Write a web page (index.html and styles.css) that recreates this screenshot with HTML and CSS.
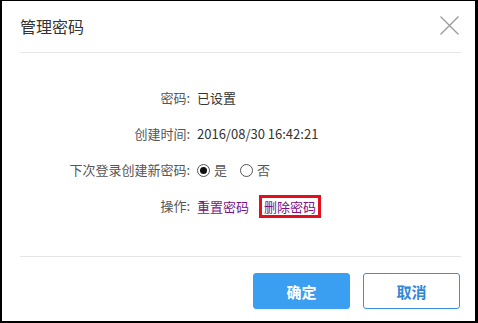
FILE: index.html
```html
<!DOCTYPE html>
<html lang="zh-CN">
<head>
<meta charset="utf-8">
<title>管理密码</title>
<link rel="stylesheet" href="styles.css">
</head>
<body>
<div class="dialog">
  <div class="header">
    <div class="title">管理密码</div>
    <svg class="close" width="19" height="19" viewBox="0 0 19 19"><path d="M0.5 0.5L18.5 18.5M18.5 0.5L0.5 18.5" stroke="#9a9a9a" stroke-width="1.3" fill="none"/></svg>
  </div>
  <div class="body">
    <div class="label">密码:</div>
    <div class="value">已设置</div>
    <div class="label">创建时间:</div>
    <div class="value">2016/08/30 16:42:21</div>
    <div class="label">下次登录创建新密码:</div>
    <div class="value radios">
      <span class="radio checked"></span><span class="opt">是</span>
      <span class="radio"></span><span class="opt">否</span>
    </div>
    <div class="label">操作:</div>
    <div class="value links">
      <a class="link">重置密码</a>
      <a class="link marked">删除密码</a>
    </div>
  </div>
  <div class="footer">
    <button class="btn primary">确定</button>
    <button class="btn secondary">取消</button>
  </div>
</div>
</body>
</html>
```

FILE: styles.css
```css
html, body {
  margin: 0;
  padding: 0;
  background: #fff;
}
body {
  font-family: "Noto Sans CJK SC", "Noto Sans", sans-serif;
  color: #333;
}
.dialog {
  box-sizing: border-box;
  width: 478px;
  height: 323px;
  border-style: solid;
  border-color: #000;
  border-width: 1px 3px 2px 2px;
  background: #fff;
}
.header {
  margin: 0 14px 0 18px;
  height: 51px;
  border-bottom: 1px solid #e6e6e6;
  display: flex;
  align-items: center;
  justify-content: space-between;
}
.title {
  font-size: 16px;
  color: #333;
  line-height: 20px;
  margin-top: -1px;
}
.close {
  display: block;
  margin-right: 2px;
  margin-top: -3px;
}
.body {
  display: grid;
  grid-template-columns: 170px auto;
  grid-auto-rows: 36px;
  column-gap: 7px;
  padding: 27px 0 32px 18px;
  font-size: 13px;
}
.label {
  text-align: right;
  color: #555;
  line-height: 36px;
}
.value {
  color: #333;
  line-height: 36px;
  display: flex;
  align-items: center;
}
.radio {
  box-sizing: border-box;
  width: 13px;
  height: 13px;
  border: 1px solid #555;
  border-radius: 50%;
  display: inline-flex;
  align-items: center;
  justify-content: center;
}
.radio.checked::after {
  content: "";
  width: 7px;
  height: 7px;
  border-radius: 50%;
  background: #111;
}
.opt {
  margin-left: 4px;
  margin-right: 13px;
  color: #555;
}
.link {
  display: inline-block;
  line-height: 15px;
  color: #7d1183;
  text-decoration: none;
}
.links {
  gap: 14px;
}
.link.marked {
  outline: 3px solid #e2101c;
  outline-offset: 1px;
  padding: 0 1px;
}
.footer {
  margin: 0 14px 0 18px;
  border-top: 1px solid #e6e6e6;
  padding-top: 16px;
  display: flex;
  justify-content: flex-end;
  gap: 13px;
}
.btn {
  box-sizing: border-box;
  width: 97px;
  height: 36px;
  border-radius: 3px;
  font-family: "Noto Sans CJK SC", "Noto Sans", sans-serif;
  font-size: 15px;
  font-weight: bold;
  cursor: pointer;
  padding: 0;
}
.btn.primary {
  background: #3a9ff0;
  border: 1px solid #3a9ff0;
  color: #fff;
}
.btn.secondary {
  background: #fff;
  border: 1px solid #3a90e0;
  color: #2f87d8;
  margin-right: 1px;
}
```
